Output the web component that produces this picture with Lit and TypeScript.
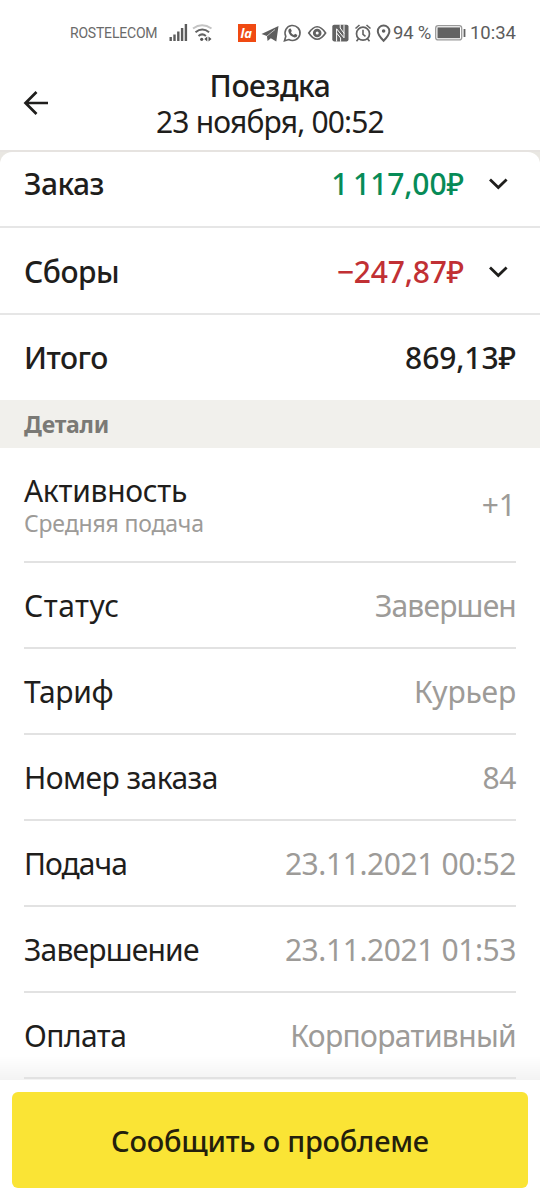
import { LitElement, html, css } from "lit";
import { customElement, property } from "lit/decorators.js";

interface Detail {
  label: string;
  value: string;
  hint?: string;
  labelSpacing: number;
  valueSpacing: number;
}

const details: Detail[] = [
  { label: "Активность", value: "+1", hint: "Средняя подача", labelSpacing: -0.28, valueSpacing: 0 },
  { label: "Статус", value: "Завершен", labelSpacing: 0.5, valueSpacing: -0.8 },
  { label: "Тариф", value: "Курьер", labelSpacing: -0.4, valueSpacing: -0.2 },
  { label: "Номер заказа", value: "84", labelSpacing: -0.55, valueSpacing: -0.4 },
  { label: "Подача", value: "23.11.2021 00:52", labelSpacing: -0.95, valueSpacing: -0.42 },
  { label: "Завершение", value: "23.11.2021 01:53", labelSpacing: -0.8, valueSpacing: -0.42 },
  { label: "Оплата", value: "Корпоративный", labelSpacing: -0.55, valueSpacing: -0.65 },
];

@customElement("status-bar")
export class StatusBar extends LitElement {
  static styles = css`
    :host { display: flex; align-items: center; height: 66px; box-sizing: border-box; padding: 0 24px 0 70px; font: 400 18.5px Roboto, sans-serif; color: #5c5c5c; white-space: nowrap; }
    .carrier { font-size: 14px; width: 88px; letter-spacing: -0.2px; color: #6a6a6a; }
    .icons { display: block; flex: none; }
    .percent { width: 41px; letter-spacing: -0.2px; }
    .clock { margin-left: auto; }
    .logo { font: italic 700 13px "Open Sans", sans-serif; }
  `;
  render() {
    return html`
      <span class="carrier">ROSTELECOM</span>
      <svg class="icons" width="235" height="34" viewBox="158 16 235 34" fill="none" stroke="#626262">
        <g fill="#5c5c5c" stroke="none">
          <rect x="169.5" y="37" width="2.4" height="4" /><rect x="173.3" y="34.5" width="2.4" height="6.5" />
          <rect x="177.1" y="31.5" width="2.4" height="9.5" /><rect x="180.9" y="28" width="2.4" height="13" />
          <rect x="184.7" y="24" width="2.4" height="17" />
        </g>
        <path d="M193 28.500q9-6.500 18.500 0" stroke="#c4c4c4" stroke-width="2" />
        <path d="M195.500 32.300q6.800-5.500 13.600 0M198.500 36q3.700-3.200 7.400 0" stroke-width="2" />
        <circle cx="201.700" cy="39.300" r="1.600" fill="#555" stroke="none" />
        <path d="M207.300 36.600v4.800l-3-2.400zM208.500 36.600v4.800l3-2.400z" fill="#555" stroke="none" />
        <rect x="238" y="24" width="18" height="18" fill="#f04a12" stroke="none" />
        <text class="logo" x="240.500" y="38" fill="#fff" stroke="none">la</text>
        <path d="M261.500 34L278.500 26 276.300 41.500 270.800 38.200 267.600 41 266.900 36z" fill="#5e5e5e" stroke="none" />
        <path d="M267 36l8-6.500" stroke="#d8d8d8" stroke-width=".8" />
        <path d="M284.500 40.800l1.300-4.500a7.500 7.500 0 1 1 3 3.200z" stroke-width="1.600" />
        <path d="M289.300 28.800l1.400-.3 1.100 2.500-.9 1.200q1 2 3 2.800l1.200-1.200 2.300 1.200q-.3 2.500-2.800 2.500-5.500-1.500-6.300-6.500 0-1.300 1-2.200z" fill="#5e5e5e" stroke="none" />
        <path d="M308.800 33q8.300-12.500 16.800 0-8.500 12.500-16.800 0z" stroke-width="1.700" />
        <circle cx="317.200" cy="33" r="2.900" stroke-width="2.800" />
        <rect x="332.300" y="24.800" width="16.200" height="16.600" rx="1.800" fill="#626262" stroke="none" />
        <path d="M336.600 41.500V28.800l7.400 9V24.800M340.200 24.500v3.500l4 5.500M336.600 33l4 5v3.800" stroke="#fff" stroke-width="1" />
        <circle cx="363" cy="33.700" r="6.500" stroke-width="1.700" />
        <path d="M355.500 28.500l4-3.500M370.500 28.500l-4-3.500M363 29.800v4.500l2.500 2M358.500 38.800l-2 2.500M367.500 38.800l2 2.500" stroke-width="1.600" />
        <path d="M383.600 40.800q-5.800-6-5.800-9.600a5.800 5.800 0 0 1 11.600 0q0 3.600-5.800 9.600z" stroke-width="2" />
        <circle cx="383.600" cy="31" r="1.800" fill="#5e5e5e" stroke="none" />
      </svg>
      <span class="percent">94 %</span>
      <svg class="icons" width="32" height="18" viewBox="434 24 32 18">
        <rect x="435.700" y="25.700" width="26" height="14.200" rx="2.500" fill="none" stroke="#999" stroke-width="1.300" />
        <rect x="437.500" y="27.400" width="22.500" height="10.800" fill="#626262" />
        <rect x="463.600" y="29" width="1.800" height="8" fill="#626262" />
      </svg>
      <span class="clock">10:34</span>
    `;
  }
}

@customElement("sum-row")
export class SumRow extends LitElement {
  @property() label = "";
  @property() amount = "";
  @property() tone = "plain";
  @property({ type: Boolean }) expandable = false;
  static styles = css`
    :host { display: flex; align-items: center; height: 87px; box-sizing: border-box; padding: 3px 24px 0; border-bottom: 2px solid #e6e6e6; font-weight: 500; font-size: 30px; line-height: 40px; color: #1f1e1c; }
    :host([first]) { height: 76px; padding: 0 24px 10px; }
    :host([last]) { height: 85px; padding-top: 1px; border-bottom: 0; }
    .label { letter-spacing: -0.5px; }
    .amount { margin-left: auto; white-space: pre; letter-spacing: -0.1px; }
    .income { color: #078b57; word-spacing: -3px; }
    .expense { color: #c13034; letter-spacing: -0.2px; }
    .chevron { display: block; margin: 0 8px 0 24px; }
  `;
  render() {
    return html`
      <span class="label">${this.label}</span>
      <span class="amount ${this.tone}">${this.amount}</span>
      ${this.expandable
        ? html`<svg class="chevron" width="20" height="14" viewBox="0 0 20 14" fill="none" stroke="#1f1e1c" stroke-width="2.800">
            <path d="M2 2.500l8.300 8L18.600 2.500" />
          </svg>`
        : ""}
    `;
  }
}

@customElement("app-root")
export class AppRoot extends LitElement {
  static styles = css`
    :host { display: flex; flex-direction: column; height: 1200px; overflow: hidden; background: #fff; color: #1f1e1c; font: 400 30px/36px "Noto Sans", sans-serif; }
    .header { display: grid; grid-template-columns: 84px 1fr 84px; align-items: center; height: 75px; padding-bottom: 9px; border-bottom: 2px solid #e6e3e0; }
    .back { display: block; margin-left: 23px; margin-bottom: 2px; }
    .titles { text-align: center; white-space: nowrap; padding-top: 1px; }
    .title { font-weight: 500; letter-spacing: -0.4px; }
    .subtitle { letter-spacing: -0.82px; }
    .backdrop { background: #e9e7e2; }
    .sheet { background: #fff; border-radius: 12px 12px 0 0; overflow: hidden; }
    .section { display: flex; align-items: center; height: 48px; padding: 0 24px; background: #f1f0ec; color: #7a7975; font-size: 23px; font-weight: 700; letter-spacing: -0.2px; }
    .details { flex: 1; padding: 0 24px; background: linear-gradient(#0000, #0000000c) bottom / 100% 24px no-repeat; }
    .row { display: flex; align-items: center; justify-content: space-between; height: 86px; padding-top: 2px; box-sizing: border-box; border-bottom: 2px solid #e2e2e2; white-space: nowrap; }
    .tall { height: 115px; padding-top: 0; }
    .hint { font-size: 23px; line-height: 28px; letter-spacing: -0.17px; color: #9d9b98; }
    .value { color: #9d9b98; }
    .footer { height: 120px; box-sizing: border-box; padding: 12px; background: #fff; }
    .report { display: block; width: 100%; height: 96px; padding: 0; border: 0; border-radius: 6px; background: #fae435; color: #241f0c; font: 500 29px "Noto Sans", sans-serif; letter-spacing: -0.23px; }
  `;
  render() {
    return html`
      <status-bar></status-bar>
      <div class="header">
        <svg class="back" width="26" height="26" viewBox="0 0 26 26" fill="none" stroke="#1f1e1c" stroke-width="2.700">
          <path d="M25 13H3M13.500 2L2.500 13l11 11" />
        </svg>
        <div class="titles">
          <div class="title">Поездка</div>
          <div class="subtitle">23 ноября, 00:52</div>
        </div>
      </div>
      <div class="backdrop">
        <div class="sheet">
          <sum-row first label="Заказ" amount="1 117,00₽" tone="income" expandable></sum-row>
          <sum-row label="Сборы" amount="−247,87₽" tone="expense" expandable></sum-row>
          <sum-row last label="Итого" amount="869,13₽"></sum-row>
        </div>
      </div>
      <div class="section">Детали</div>
      <div class="details">
        ${details.map(
          (d) => html`<div class="row ${d.hint ? "tall" : ""}">
            <div>
              <div style="letter-spacing:${d.labelSpacing}px">${d.label}</div>
              ${d.hint ? html`<div class="hint">${d.hint}</div>` : ""}
            </div>
            <div class="value" style="letter-spacing:${d.valueSpacing}px">${d.value}</div>
          </div>`
        )}
      </div>
      <div class="footer"><button class="report">Сообщить о проблеме</button></div>
    `;
  }
}
